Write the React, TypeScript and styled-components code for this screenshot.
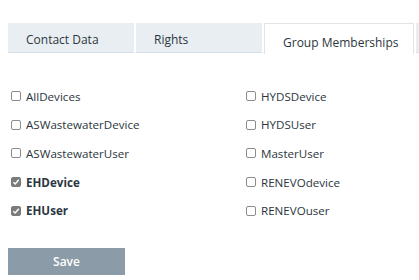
import styled, { createGlobalStyle } from 'styled-components';

const GlobalStyle = createGlobalStyle`
  html, body {
    margin: 0;
    padding: 0;
    background: #ffffff;
    font-family: 'Open Sans', 'Noto Sans', sans-serif;
    color: #2f3a44;
  }
`;

const Page = styled.div`
  width: 419px;
  height: 280px;
  overflow: hidden;
  display: flex;
  flex-direction: column;
`;

const TabBar = styled.div`
  display: flex;
  gap: 2px;
  padding: 23px 0 0 8px;
  overflow: hidden;
  align-items: flex-start;
`;

const Tab = styled.div<{ $active?: boolean; $width: number }>`
  flex-shrink: 0;
  box-sizing: border-box;
  width: ${(p) => p.$width}px;
  height: ${(p) => (p.$active ? 31 : 30)}px;
  padding: ${(p) => (p.$active ? '10px' : '8px')} 0 0 18px;
  font-size: 12px;
  font-weight: 500;
  white-space: nowrap;
  color: #2c3640;
  background: ${(p) => (p.$active ? '#ffffff' : '#e9eef2')};
  border: ${(p) => (p.$active ? '1px solid #dfe4e9' : 'none')};
  border-bottom: ${(p) => (p.$active ? 'none' : '1px solid #d6dfe7')};
`;

const Groups = styled.div`
  display: grid;
  grid-template-columns: 235px 1fr;
  grid-auto-rows: 28.6px;
  padding: 28px 0 0 11px;
`;

const Item = styled.label<{ $checked?: boolean }>`
  display: flex;
  align-items: center;
  gap: 5px;
  font-size: 11.6px;
  font-weight: ${(p) => (p.$checked ? 700 : 400)};
  color: #2b3640;
  white-space: nowrap;
`;

const Box = styled.span<{ $checked?: boolean }>`
  box-sizing: border-box;
  width: 10px;
  height: 10px;
  border-radius: 2px;
  border: 1px solid ${(p) => (p.$checked ? '#7b7b7b' : '#8c8c8c')};
  background: ${(p) => (p.$checked ? '#7b7b7b' : '#ffffff')};
  display: flex;
  align-items: center;
  justify-content: center;
`;

const SaveButton = styled.button`
  margin: 23px 0 0 8px;
  width: 117px;
  height: 27px;
  border: none;
  background: #8b9ba7;
  color: #ffffff;
  font-family: 'Open Sans', 'Noto Sans', sans-serif;
  font-size: 12px;
  font-weight: 600;
  padding: 0;
`;

const groups = [
  ['AllDevices', false],
  ['HYDSDevice', false],
  ['ASWastewaterDevice', false],
  ['HYDSUser', false],
  ['ASWastewaterUser', false],
  ['MasterUser', false],
  ['EHDevice', true],
  ['RENEVOdevice', false],
  ['EHUser', true],
  ['RENEVOuser', false],
] as const;

const Check = ({ checked }: { checked: boolean }) => (
  <Box $checked={checked}>
    {checked && (
      <svg width="8" height="8" viewBox="0 0 8 8">
        <path d="M1.3 4.2 L3.2 6 L6.8 1.8" fill="none" stroke="#fff" strokeWidth="1.5" />
      </svg>
    )}
  </Box>
);

const App = () => {
  return (
    <Page>
      <GlobalStyle />
      <TabBar>
        <Tab $width={126}>Contact Data</Tab>
        <Tab $width={126}>Rights</Tab>
        <Tab $width={150} $active>
          Group Memberships
        </Tab>
        {/* next tab, scrolled out of view */}
        <Tab $width={126} />
      </TabBar>
      <Groups>
        {groups.map(([name, checked]) => (
          <Item key={name} $checked={checked}>
            <Check checked={checked} />
            {name}
          </Item>
        ))}
      </Groups>
      <div>
        <SaveButton>Save</SaveButton>
      </div>
    </Page>
  );
};

export default App;
